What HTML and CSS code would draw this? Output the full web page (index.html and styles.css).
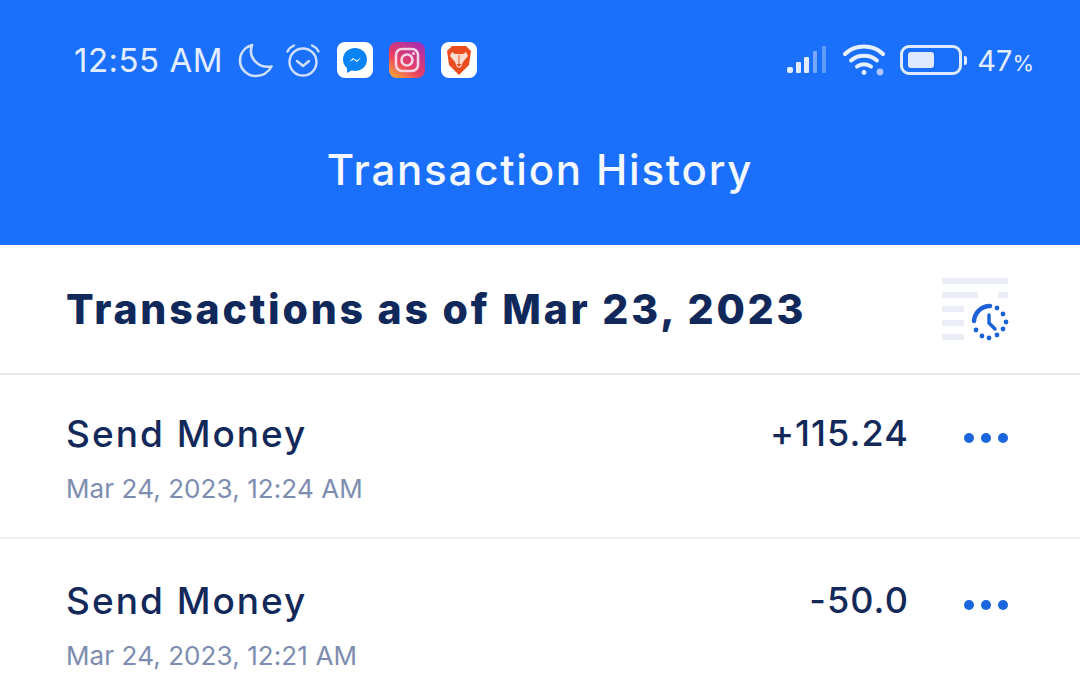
FILE: index.html
```html
<!DOCTYPE html>
<html lang="en">

<head>
    <meta charset="UTF-8">
    <meta name="viewport" content="width=device-width, initial-scale=1.0">
    <title>Transaction History</title>
    <link rel="stylesheet" href="styles.css">
</head>

<body>
<div class="header">
    <div class="status_bar">
        <div class="status_left">
            <span class="clock">12:55 AM</span>
            <svg class="moon" width="36" height="36" viewBox="0 0 36 36" fill="none">
                <path d="M14 3C6.500 5.500 2 11.500 2 18.500C2 27 9 34 17.500 34C24.500 34 30.500 30 33.500 24.500C21 26.500 9.500 16.500 14 3Z" stroke="#cfe0ff" stroke-width="2.600" stroke-linejoin="round"/>
            </svg>
            <svg class="alarm" width="36" height="36" viewBox="0 0 36 36" fill="none" stroke="#cfe0ff" stroke-width="2.400" stroke-linecap="round" stroke-linejoin="round">
                <circle cx="18" cy="20" r="13.500"/>
                <path d="M12 19l6 5 6-5"/>
                <path d="M2.500 9.500C4 6.500 6.500 4.500 9 3.500"/>
                <path d="M33.500 9.500C32 6.500 29.500 4.500 27 3.500"/>
            </svg>
            <svg class="app" width="36" height="36" viewBox="0 0 36 36">
                <rect width="36" height="36" rx="8" fill="#fff"/>
                <path d="M18 6C11 6 6 11 6 17.500C6 21 7.500 24 10 26V31L14.500 28.500C15.500 28.800 16.800 29 18 29C25 29 30 24 30 17.500C30 11 25 6 18 6Z" fill="#0a84f5"/>
                <path d="M12 20L16 16L19.500 18.500L24 15.500L20 20L16.500 17.500Z" fill="#fff"/>
            </svg>
            <svg class="app" width="36" height="36" viewBox="0 0 36 36">
                <defs>
                    <linearGradient id="insta" x1="0.100" y1="1" x2="0.800" y2="0">
                        <stop offset="0" stop-color="#f9a83a"/>
                        <stop offset="0.400" stop-color="#e8405f"/>
                        <stop offset="1" stop-color="#a62fb0"/>
                    </linearGradient>
                </defs>
                <rect width="36" height="36" rx="8" fill="url(#insta)"/>
                <rect x="7" y="7" width="22" height="22" rx="6" fill="none" stroke="#f6d3e6" stroke-width="2.600"/>
                <circle cx="18" cy="18" r="5.500" fill="none" stroke="#f6d3e6" stroke-width="2.600"/>
                <circle cx="24.500" cy="11.500" r="1.500" fill="#f6d3e6"/>
            </svg>
            <svg class="app" width="36" height="36" viewBox="0 0 36 36">
                <rect width="36" height="36" rx="8" fill="#fff"/>
                <path d="M11 4H25L30 9L28 23L18 33L8 23L6 9Z" fill="#ea4b1f"/>
                <path d="M11 10L14 12H22L25 10L27 14L22 20L20 25L18 26L16 25L14 20L9 14Z" fill="#fbdccf"/>
                <path d="M15.500 22H20.500L18 25Z" fill="#ea4b1f"/>
                <path d="M18 13V22" stroke="#f08a62" stroke-width="1.600"/>
            </svg>
        </div>
        <div class="status_right">
            <svg class="signal" width="42" height="30" viewBox="0 0 42 30" fill="#e4edff">
                <rect x="0" y="22" width="6" height="6" rx="2"/>
                <rect x="9" y="17" width="5" height="11" rx="1"/>
                <rect x="17" y="12" width="5" height="16" rx="1"/>
                <rect x="26" y="6" width="4" height="22" rx="1" opacity="0.450"/>
                <rect x="35" y="1" width="4" height="27" rx="1" opacity="0.350"/>
            </svg>
            <svg class="wifi" width="44" height="34" viewBox="0 0 44 34" fill="none" stroke="#e8f0ff" stroke-width="4" stroke-linecap="round">
                <path d="M2 11C12 1 30 1 40 11"/>
                <path d="M8 17.500C15 11 27 11 34 17.500"/>
                <path d="M14 23.500C18 20.500 24 20.500 28 23.500"/>
                <circle cx="21" cy="29.500" r="1.800" fill="#e8f0ff" stroke-width="1.200"/>
                <circle cx="37" cy="29" r="3.400" fill="#a9c7ff" stroke="none"/>
            </svg>
            <div class="battery">
                <div class="battery_body">
                    <div class="battery_level"></div>
                </div>
                <div class="battery_cap"></div>
            </div>
            <span class="percent">47<small>%</small></span>
        </div>
    </div>
    <div class="title">Transaction History</div>
</div>

<div class="as_of">
    <h1>Transactions as of Mar 23, 2023</h1>
    <svg class="history_icon" width="68" height="64" viewBox="0 0 68 64">
        <g fill="#eceef6">
            <rect x="0" y="0" width="66" height="6"/>
            <rect x="0" y="14" width="36" height="6"/>
            <rect x="56" y="14" width="10" height="6"/>
            <rect x="0" y="28" width="22" height="6"/>
            <rect x="0" y="42" width="22" height="6"/>
            <rect x="0" y="56" width="22" height="6"/>
        </g>
        <path d="M32 43A16 16 0 0 1 48 28" fill="none" stroke="#1a62d6" stroke-width="4.500" stroke-linecap="round"/>
        <g fill="#1a62d6">
            <circle cx="55" cy="30" r="2.400"/>
            <circle cx="61" cy="36" r="2.400"/>
            <circle cx="64" cy="44" r="2.400"/>
            <circle cx="61" cy="51" r="2.400"/>
            <circle cx="55" cy="57" r="2.400"/>
            <circle cx="47" cy="60" r="2.400"/>
            <circle cx="40" cy="58" r="2.400"/>
            <circle cx="34" cy="52" r="2.400"/>
        </g>
        <path d="M47 37V45L53 51" fill="none" stroke="#1a62d6" stroke-width="3.400" stroke-linecap="round"/>
    </svg>
</div>

<div class="rows">
    <div class="row">
        <div class="row_text">
            <div class="row_name">Send Money</div>
            <div class="row_date">Mar 24, 2023, 12:24 AM</div>
        </div>
        <div class="row_amount">+115.24</div>
        <div class="dots"><i></i><i></i><i></i></div>
    </div>
    <div class="row row_next">
        <div class="row_text">
            <div class="row_name">Send Money</div>
            <div class="row_date">Mar 24, 2023, 12:21 AM</div>
        </div>
        <div class="row_amount">-50.0</div>
        <div class="dots"><i></i><i></i><i></i></div>
    </div>
</div>
</body>

</html>
```

FILE: styles.css
```css
* {
    margin: 0;
    padding: 0;
    box-sizing: border-box;
}

body {
    background: #fff;
    font-family: "Inter", "Liberation Sans", sans-serif;
    height: 692px;
    overflow: hidden;
}

.header {
    height: 245px;
    background: #1a70fb;
    color: #fff;
    padding: 40px 46px 0 74px;
}

.status_bar {
    display: flex;
    justify-content: space-between;
    align-items: center;
    height: 40px;
}

.status_left,
.status_right {
    display: flex;
    align-items: center;
}

.clock {
    font-size: 33px;
    letter-spacing: 0.5px;
    color: #e3edff;
    margin-right: 15px;
}

.status_left svg {
    margin-right: 16px;
}

.status_left .moon {
    margin-right: 11px;
}

.status_left .alarm {
    margin-right: 16px;
}

.status_right svg {
    margin-right: 14px;
}

.status_right .wifi {
    margin-right: 13px;
}

.battery {
    display: flex;
    align-items: center;
    margin-right: 10px;
}

.battery_body {
    width: 62px;
    height: 30px;
    border: 3px solid #dfe9ff;
    border-radius: 9px;
    padding: 4px 5px;
}

.battery_level {
    width: 26px;
    height: 100%;
    background: #dfe9ff;
    border-radius: 3px;
}

.battery_cap {
    width: 3px;
    height: 9px;
    margin-left: 2px;
    background: #dfe9ff;
    border-radius: 0 2px 2px 0;
}

.percent {
    font-size: 29px;
    color: #e3edff;
}

.percent small {
    font-size: 22px;
}

.title {
    margin: 64px 0 0 -28px;
    text-align: center;
    font-size: 42px;
    font-weight: 500;
    letter-spacing: 1.8px;
    color: #f4f8ff;
}

.as_of {
    height: 130px;
    display: flex;
    justify-content: space-between;
    align-items: center;
    padding: 0 70px 0 66px;
    border-bottom: 2px solid #e9e9ec;
}

.as_of h1 {
    font-size: 41px;
    font-weight: 800;
    color: #11285a;
    letter-spacing: 2.8px;
}

.history_icon {
    margin-top: 2px;
}

.row {
    height: 164px;
    display: flex;
    align-items: flex-start;
    padding: 0 72px 0 66px;
    border-bottom: 2px solid #f0f0f3;
}

.row_text {
    flex: 1;
    padding-top: 36px;
}

.row_next .row_text,
.row_next .row_amount {
    padding-top: 39px;
}

.row_next .dots {
    margin-top: 61px;
}

.row_name {
    font-size: 37px;
    font-weight: 500;
    color: #13295a;
    letter-spacing: 2px;
}

.row_date {
    font-size: 26px;
    color: #7d8db0;
    letter-spacing: 0.1px;
    margin-top: 17px;
}

.row_amount {
    padding-top: 36px;
    font-size: 36px;
    font-weight: 500;
    color: #13295a;
    letter-spacing: 1.1px;
}

.dots {
    display: flex;
    gap: 7px;
    margin: 58px 0 0 55px;
}

.dots i {
    display: block;
    width: 10px;
    height: 10px;
    border-radius: 50%;
    background: #1a66dc;
}
```
